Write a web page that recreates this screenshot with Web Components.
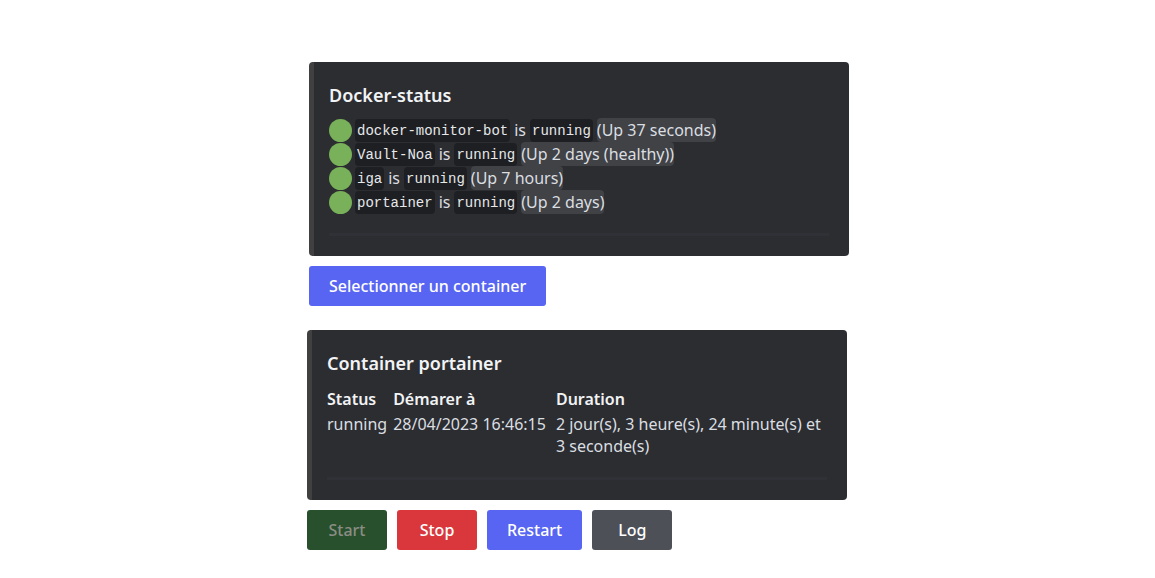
<!DOCTYPE html>
<html lang="fr">
<head>
<meta charset="utf-8">
<meta name="viewport" content="width=device-width, initial-scale=1">
<title>Docker-status</title>
<style>
  body { margin: 0; background: #fff; color: #dbdee1; font: 16px/24px "Noto Sans", "Open Sans", sans-serif; }
</style>
</head>
<body>
<docker-feed>
  <bot-message side="end">
    <embed-card heading="Docker-status">
      <status-list>
        <status-row name="docker-monitor-bot" state="running">(Up 37 seconds)</status-row>
        <status-row name="Vault-Noa" state="running">(Up 2 days (healthy))</status-row>
        <status-row name="iga" state="running">(Up 7 hours)</status-row>
        <status-row name="portainer" state="running">(Up 2 days)</status-row>
      </status-list>
    </embed-card>
    <action-button slot="actions" tone="primary">Selectionner un container</action-button>
  </bot-message>
  <bot-message side="start">
    <embed-card heading="Container portainer">
      <container-details status="running" started="28/04/2023 16:46:15" duration="2 jour(s), 3 heure(s), 24 minute(s) et 3 seconde(s)"></container-details>
    </embed-card>
    <action-button slot="actions" tone="success" disabled>Start</action-button>
    <action-button slot="actions" tone="danger">Stop</action-button>
    <action-button slot="actions" tone="primary">Restart</action-button>
    <action-button slot="actions" tone="secondary">Log</action-button>
  </bot-message>
</docker-feed>
<script>
  class Base extends HTMLElement {
    connectedCallback() {
      if (this.shadowRoot) return;
      const root = this.attachShadow({ mode: 'open' });
      root.innerHTML = this.view();
      root.querySelectorAll('[data-attr]').forEach(el => {
        el.textContent = this.getAttribute(el.dataset.attr);
      });
    }
  }

  customElements.define('docker-feed', class extends Base {
    view() {
      return `<style>
        :host { display: block; }
        main { display: flex; flex-direction: column; gap: 24px; box-sizing: border-box;
               max-width: 543px; margin: 0 auto; padding: 62px 0 28px 1px; }
      </style><main><slot></slot></main>`;
    }
  });

  customElements.define('bot-message', class extends Base {
    view() {
      return `<style>
        :host { display: flex; flex-direction: column; gap: 10px; width: 100%; max-width: 540px; }
        :host([side="end"]) { align-self: flex-end; }
        .actions { display: flex; flex-wrap: wrap; gap: 10px; }
      </style><slot></slot><div class="actions"><slot name="actions"></slot></div>`;
    }
  });

  customElements.define('embed-card', class extends Base {
    view() {
      return `<style>
        :host { display: block; }
        article { padding: 20px 20px 20px 15px; border-left: 5px solid #404040;
                  border-radius: 4px; background: #2b2d31; }
        h2 { margin: 0 0 10px; color: #f2f3f5; font-size: 18px; line-height: 26px; font-weight: 600; }
        hr { height: 3px; margin: 19px 0 0; border: 0; background: #2f3136; }
      </style><article><h2 data-attr="heading"></h2><slot></slot><hr></article>`;
    }
  });

  customElements.define('status-list', class extends Base {
    view() {
      return `<style>:host { display: flex; flex-direction: column; }</style><slot></slot>`;
    }
  });

  customElements.define('status-row', class extends Base {
    view() {
      return `<style>
        :host { display: flex; align-items: center; gap: 4px; line-height: 24px; white-space: nowrap; }
        svg { width: 23px; height: 23px; margin-right: -1px; }
        code { padding: 2px 2px 0; border-radius: 4px; background: #1e1f22; color: #e6e8ea;
               font: 14px/21px "Liberation Mono", monospace; }
        .up { border-radius: 4px; background: #404246; }
      </style>
      <svg viewBox="0 0 23 23" role="img" aria-label="En ligne"><circle cx="11.5" cy="11.5" r="11.5" fill="#78b159"/></svg>
      <code data-attr="name"></code><span>is</span><code data-attr="state"></code><span class="up"><slot></slot></span>`;
    }
  });

  customElements.define('container-details', class extends Base {
    view() {
      return `<style>
        :host { display: block; padding: 2px 0 1px; }
        table { width: 100%; border-collapse: collapse; text-align: left; line-height: 22px; }
        th, td { padding: 0 10px 0 0; vertical-align: top; white-space: nowrap; }
        th { padding-bottom: 3px; color: #f2f3f5; font-weight: 600; }
        th:first-child, td:first-child { padding-right: 6px; }
        th:last-child, td:last-child { width: 100%; padding-right: 0; white-space: normal; }
      </style>
      <table>
        <thead><tr><th scope="col">Status</th><th scope="col">Démarer à</th><th scope="col">Duration</th></tr></thead>
        <tbody><tr><td data-attr="status"></td><td data-attr="started"></td><td data-attr="duration"></td></tr></tbody>
      </table>`;
    }
  });

  customElements.define('action-button', class extends Base {
    view() {
      return `<style>
        :host { display: block; }
        button { display: block; min-width: 80px; height: 40px; padding: 0 20px; border: 0; border-radius: 3px;
                 background: #5865f2; color: #fff; font: inherit; font-weight: 500; cursor: pointer; }
        :host([tone="danger"]) button { background: #da373c; }
        :host([tone="secondary"]) button { background: #4e5058; }
        :host([tone="success"]) button { background: #28502d; }
        button:disabled { color: #8b8d84; cursor: not-allowed; }
      </style><button type="button"${this.hasAttribute('disabled') ? ' disabled' : ''}><slot></slot></button>`;
    }
  });
</script>
</body>
</html>
